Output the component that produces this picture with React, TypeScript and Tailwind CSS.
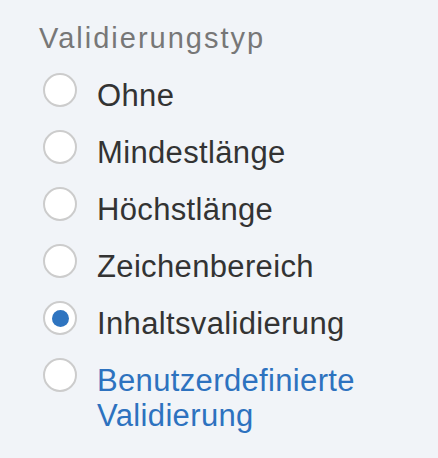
import React from "react";

const items = [
  { label: "Ohne", checked: false },
  { label: "Mindestlänge", checked: false },
  { label: "Höchstlänge", checked: false },
  { label: "Zeichenbereich", checked: false },
  { label: "Inhaltsvalidierung", checked: true },
  { label: "Benutzerdefinierte Validierung", checked: false, link: true },
];

export default function App() {
  return (
    <div className="w-[438px] h-[458px] bg-[#f1f4f8] pl-[39px] pt-[21px] pr-[20px] font-['Liberation_Sans',Arial,sans-serif]">
      <div className="text-[29px] leading-[34px] tracking-[2px] text-[#777777]">Validierungstyp</div>
      <div className="mt-[18px] flex flex-col gap-[17px]">
        {items.map((it) => (
          <label key={it.label} className="flex items-start gap-[20px]">
            <span className="ml-[4px] w-[34px] h-[34px] shrink-0 rounded-full border-2 border-[#cccccc] bg-white flex items-center justify-center">
              {it.checked && <span className="w-[17px] h-[17px] rounded-full bg-[#2e74c0]" />}
            </span>
            <span
              className={
                "mt-[5px] text-[31px] leading-[35px] tracking-[0.35px] w-[300px] " +
                (it.link ? "text-[#2d72bf]" : "text-[#333333]")
              }
            >
              {it.label}
            </span>
          </label>
        ))}
      </div>
    </div>
  );
}
